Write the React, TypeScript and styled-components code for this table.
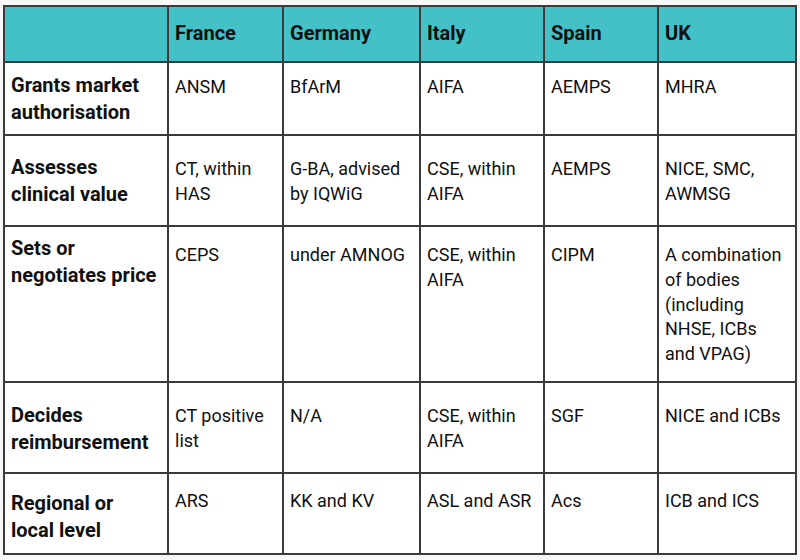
import React from "react";
import styled, { createGlobalStyle } from "styled-components";

const Global = createGlobalStyle`
  html, body { margin: 0; padding: 0; background: #f8f8f8; }
  body { font-family: Roboto, "Liberation Sans", Arial, sans-serif; color: #111; }
`;

const Page = styled.div`
  padding: 5px 0 0 3px;
`;

const Grid = styled.div`
  display: grid;
  grid-template-columns: 164px 115px 137px 124px 114px 138px;
  grid-template-rows: 56px 73px 91px 156px 91px 81px;
  width: max-content;
  border-top: 2px solid #3b3b3b;
  border-left: 2px solid #3b3b3b;
  background: #fff;
`;

const Cell = styled.div<{ $pad: number }>`
  box-sizing: border-box;
  border-right: 2px solid #3b3b3b;
  border-bottom: 2px solid #3b3b3b;
  padding: ${(p) => p.$pad}px 4px 0 6px;
  white-space: nowrap;
`;

const HeadCell = styled(Cell)`
  background: #43c1c6;
  font-weight: 700;
  font-size: 20px;
  line-height: 28px;
`;

const LabelCell = styled(Cell)`
  font-weight: 700;
  font-size: 20px;
  line-height: 27px;
`;

const DataCell = styled(Cell)`
  font-size: 18px;
  line-height: 24.8px;
`;

const countries = ["France", "Germany", "Italy", "Spain", "UK"];

const rows: { label: string[]; lp: number; dp: number; cells: string[][] }[] = [
  {
    label: ["Grants market", "authorisation"],
    lp: 9,
    dp: 12,
    cells: [["ANSM"], ["BfArM"], ["AIFA"], ["AEMPS"], ["MHRA"]],
  },
  {
    label: ["Assesses", "clinical value"],
    lp: 18,
    dp: 21,
    cells: [
      ["CT, within", "HAS"],
      ["G-BA, advised", "by IQWiG"],
      ["CSE, within", "AIFA"],
      ["AEMPS"],
      ["NICE, SMC,", "AWMSG"],
    ],
  },
  {
    label: ["Sets or", "negotiates price"],
    lp: 8,
    dp: 16,
    cells: [
      ["CEPS"],
      ["under AMNOG"],
      ["CSE, within", "AIFA"],
      ["CIPM"],
      ["A combination", "of bodies", "(including", "NHSE, ICBs", "and VPAG)"],
    ],
  },
  {
    label: ["Decides", "reimbursement"],
    lp: 19,
    dp: 21,
    cells: [
      ["CT positive", "list"],
      ["N/A"],
      ["CSE, within", "AIFA"],
      ["SGF"],
      ["NICE and ICBs"],
    ],
  },
  {
    label: ["Regional or", "local level"],
    lp: 16,
    dp: 15,
    cells: [["ARS"], ["KK and KV"], ["ASL and ASR"], ["Acs"], ["ICB and ICS"]],
  },
];

const Lines = ({ lines }: { lines: string[] }) => (
  <>
    {lines.map((l, i) => (
      <React.Fragment key={i}>
        {i > 0 && <br />}
        {l}
      </React.Fragment>
    ))}
  </>
);

export default function App() {
  return (
    <>
      <Global />
      <Page>
        <Grid>
          <HeadCell $pad={12} />
          {countries.map((c) => (
            <HeadCell key={c} $pad={12}>
              {c}
            </HeadCell>
          ))}
          {rows.map((r, ri) => (
            <React.Fragment key={ri}>
              <LabelCell $pad={r.lp}>
                <Lines lines={r.label} />
              </LabelCell>
              {r.cells.map((c, ci) => (
                <DataCell key={ci} $pad={r.dp}>
                  <Lines lines={c} />
                </DataCell>
              ))}
            </React.Fragment>
          ))}
        </Grid>
      </Page>
    </>
  );
}
